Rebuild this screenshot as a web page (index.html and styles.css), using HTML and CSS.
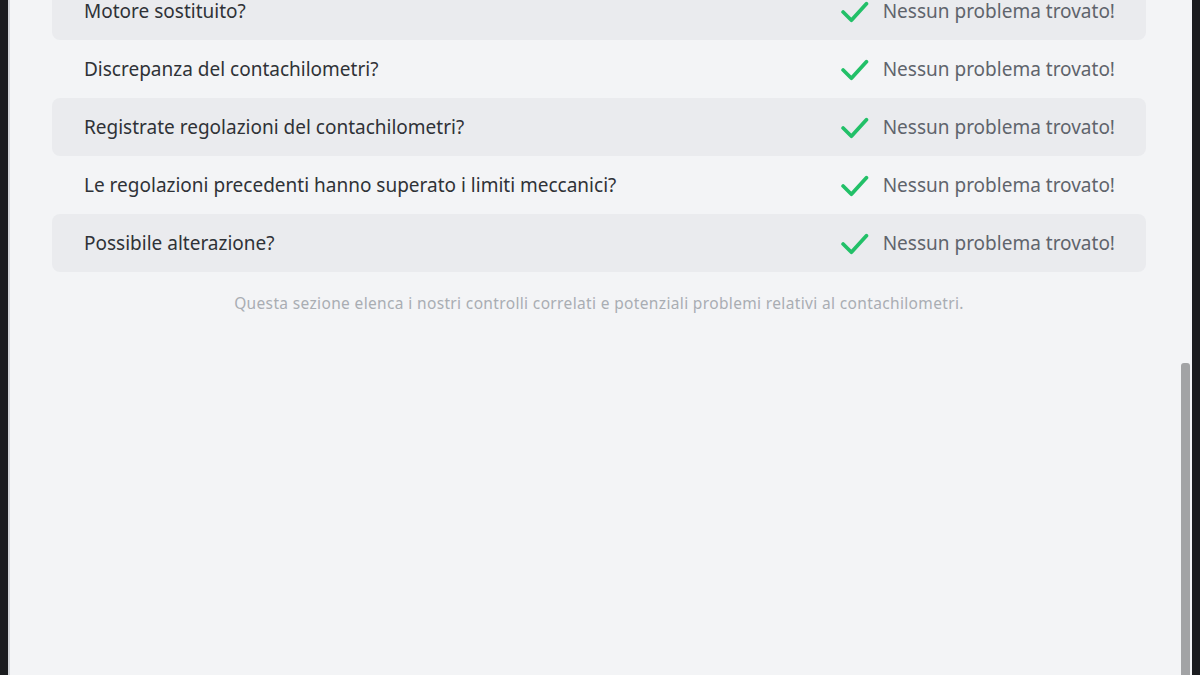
FILE: index.html
```html
<!DOCTYPE html>
<html lang="it">

<head>
  <meta charset="UTF-8">
  <title>Controlli contachilometri</title>
  <link rel="stylesheet" href="styles.css">
</head>

<body>
  <div class="frame">
    <main class="page">
      <section class="checks">
        <div class="row shaded">
          <span class="question">Motore sostituito?</span>
          <span class="result">
            <svg class="tick" viewBox="0 0 28 28"><path d="M3 14.5 L11 22.5 L25.5 6.5" /></svg>
            Nessun problema trovato!
          </span>
        </div>
        <div class="row">
          <span class="question">Discrepanza del contachilometri?</span>
          <span class="result">
            <svg class="tick" viewBox="0 0 28 28"><path d="M3 14.5 L11 22.5 L25.5 6.5" /></svg>
            Nessun problema trovato!
          </span>
        </div>
        <div class="row shaded">
          <span class="question">Registrate regolazioni del contachilometri?</span>
          <span class="result">
            <svg class="tick" viewBox="0 0 28 28"><path d="M3 14.5 L11 22.5 L25.5 6.5" /></svg>
            Nessun problema trovato!
          </span>
        </div>
        <div class="row">
          <span class="question">Le regolazioni precedenti hanno superato i limiti meccanici?</span>
          <span class="result">
            <svg class="tick" viewBox="0 0 28 28"><path d="M3 14.5 L11 22.5 L25.5 6.5" /></svg>
            Nessun problema trovato!
          </span>
        </div>
        <div class="row shaded">
          <span class="question">Possibile alterazione?</span>
          <span class="result">
            <svg class="tick" viewBox="0 0 28 28"><path d="M3 14.5 L11 22.5 L25.5 6.5" /></svg>
            Nessun problema trovato!
          </span>
        </div>
      </section>
      <p class="note">Questa sezione elenca i nostri controlli correlati e potenziali problemi relativi al contachilometri.</p>
    </main>
    <div class="scrollbar">
      <div class="thumb"></div>
    </div>
  </div>
</body>

</html>
```

FILE: styles.css
```css
html,
body {
  height: 100%;
}

body {
  margin: 0;
  background-color: #1b1c1f;
  font-family: "Noto Sans", "Open Sans", sans-serif;
  overflow: hidden;
}

.frame {
  display: flex;
  height: 100%;
  margin: 0 8px;
  border-left: 2px solid #d3d5d9;
  background-color: #f3f4f6;
}

.page {
  flex: 1;
  padding: 0 35px 0 42px;
}

.checks {
  margin-top: -18px;
}

.row {
  display: flex;
  align-items: center;
  justify-content: space-between;
  height: 58px;
  padding: 0 31px 0 32px;
  border-radius: 8px;
}

.row.shaded {
  background-color: #eaebee;
}

.question {
  font-size: 19px;
  color: #2f3237;
}

.result {
  display: flex;
  align-items: center;
  gap: 14px;
  font-size: 19px;
  color: #5f646c;
}

.tick {
  width: 29px;
  height: 29px;
}

.tick path {
  fill: none;
  stroke: #22c068;
  stroke-width: 3.6;
  stroke-linecap: round;
  stroke-linejoin: round;
}

.note {
  margin: 20px 0 0;
  text-align: center;
  font-size: 15.5px;
  letter-spacing: 0.35px;
  color: #a9adb3;
}

.scrollbar {
  width: 11px;
  display: flex;
  flex-direction: column;
  padding-top: 363px;
}

.thumb {
  flex: 1;
  width: 9px;
  background-color: #a2a3a5;
  border-radius: 3px 3px 0 0;
}
```
